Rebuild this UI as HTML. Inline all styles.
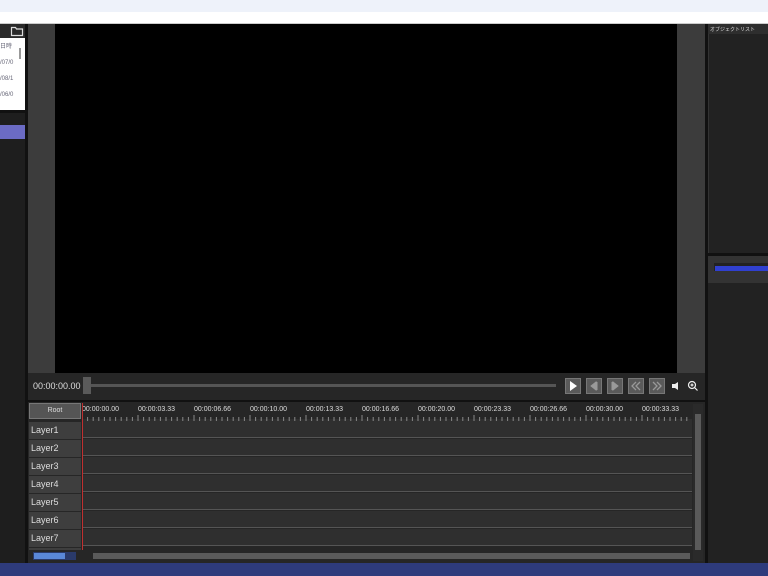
<!DOCTYPE html>
<html><head><meta charset="utf-8"><style>
*{margin:0;padding:0;box-sizing:border-box}
body{width:768px;height:576px;overflow:hidden;background:#1e1e1e;font-family:"Liberation Sans","Noto Sans CJK JP",sans-serif;position:relative}
.a{position:absolute}
.t{font-size:7px;color:#ddd}
.lay{position:absolute;left:29px;width:52px;height:17px;background:#3e3e3e;color:#ddd;font-size:9px;line-height:17px;padding-left:2px}
.row{position:absolute;left:82px;width:610px;height:17px;background:#2f2f2f;border-bottom:1px solid #555}
.btn{position:absolute;top:378px;width:16px;height:16px;background:#5a5a5a;border:1px solid #777}
</style></head><body>
<div class="a" style="left:0;top:0;width:768px;height:12px;background:#eef2fa"></div>
<div class="a" style="left:0;top:12px;width:768px;height:12px;background:#fff;border-bottom:1px solid #ccc"></div>
<!-- left panel -->
<div class="a" style="left:0;top:24px;width:25px;height:14px;background:#2a2a2a"></div>
<svg class="a" style="left:10px;top:25px" width="14" height="12"><path d="M1.5 2.5h4l1 1.5h6v6.5h-11z" fill="none" stroke="#ddd" stroke-width="1.2"/></svg>
<div class="a" style="left:0;top:38px;width:25px;height:72px;background:#fff;font-size:6px;color:#667;line-height:16px;padding-top:1px">日時<br>/07/0<br>/08/1<br>/06/0</div>
<div class="a" style="left:19px;top:48px;width:2px;height:11px;background:#999"></div>
<div class="a" style="left:0;top:110px;width:25px;height:3px;background:#111"></div>
<div class="a" style="left:0;top:125px;width:25px;height:14px;background:#6b6bc4"></div>
<div class="a" style="left:25px;top:24px;width:3px;height:540px;background:#111"></div>
<!-- preview -->
<div class="a" style="left:28px;top:24px;width:677px;height:349px;background:#3c3c3c"></div>
<div class="a" style="left:55px;top:24px;width:622px;height:349px;background:#000"></div>
<div class="a" style="left:28px;top:373px;width:677px;height:27px;background:#262626"></div>
<div class="a t" style="left:33px;top:381px;font-size:9px;color:#ddd">00:00:00.00</div>
<div class="a" style="left:90px;top:384px;width:466px;height:3px;background:#555"></div>
<div class="a" style="left:83px;top:377px;width:8px;height:17px;background:#5a5a5a"></div>
<div class="btn" style="left:565px"><svg width="14" height="14"><path d="M4 2v10l7-5z" fill="#fff"/></svg></div>
<div class="btn" style="left:586px"><svg width="14" height="14"><path d="M9 3v8l-5-4z M10 3v8" fill="#999" stroke="#999"/></svg></div>
<div class="btn" style="left:607px"><svg width="14" height="14"><path d="M5 3v8l5-4z M4 3v8" fill="#999" stroke="#999"/></svg></div>
<div class="btn" style="left:628px"><svg width="14" height="14"><path d="M7 3l-4 4 4 4M11 3l-4 4 4 4" fill="none" stroke="#999" stroke-width="1.3"/></svg></div>
<div class="btn" style="left:649px"><svg width="14" height="14"><path d="M3 3l4 4-4 4M7 3l4 4-4 4" fill="none" stroke="#999" stroke-width="1.3"/></svg></div>
<svg class="a" style="left:671px;top:381px" width="10" height="10"><path d="M1 3h3l3-2v8l-3-2h-3z" fill="#eee"/></svg>
<svg class="a" style="left:687px;top:380px" width="12" height="12"><circle cx="5" cy="5" r="3.5" fill="none" stroke="#eee" stroke-width="1.2"/><path d="M7.5 7.5l3 3M3.5 5h3M5 3.5v3" stroke="#eee" stroke-width="1.2"/></svg>
<div class="a" style="left:28px;top:400px;width:677px;height:2px;background:#111"></div>
<!-- timeline -->
<div class="a" style="left:28px;top:402px;width:677px;height:161px;background:#262626"></div>
<div class="a" style="left:29px;top:403px;width:52px;height:16px;background:#555;border:1px solid #777;color:#ddd;font-size:7px;text-align:center;line-height:14px">Root</div>
<div class="a" style="left:82px;top:419px;width:610px;height:2px;background:#2f2f2f"></div>
<svg class="a" style="left:82px;top:403px" width="610" height="18">
<g font-size="7" fill="#ddd" font-family="Liberation Sans">
<text x="0" y="8">00:00:00.00</text><text x="56" y="8">00:00:03.33</text><text x="112" y="8">00:00:06.66</text><text x="168" y="8">00:00:10.00</text><text x="224" y="8">00:00:13.33</text><text x="280" y="8">00:00:16.66</text><text x="336" y="8">00:00:20.00</text><text x="392" y="8">00:00:23.33</text><text x="448" y="8">00:00:26.66</text><text x="504" y="8">00:00:30.00</text><text x="560" y="8">00:00:33.33</text></g>
<path d="M0 12v6M5.6 14v4M11.2 14v4M16.8 14v4M22.4 14v4M28 14v4M33.6 14v4M39.2 14v4M44.8 14v4M50.4 14v4M56 12v6M61.6 14v4M67.2 14v4M72.8 14v4M78.4 14v4M84 14v4M89.6 14v4M95.2 14v4M100.8 14v4M106.4 14v4M112 12v6M117.6 14v4M123.2 14v4M128.8 14v4M134.4 14v4M140 14v4M145.6 14v4M151.2 14v4M156.8 14v4M162.4 14v4M168 12v6M173.6 14v4M179.2 14v4M184.8 14v4M190.4 14v4M196 14v4M201.6 14v4M207.2 14v4M212.8 14v4M218.4 14v4M224 12v6M229.6 14v4M235.2 14v4M240.8 14v4M246.4 14v4M252 14v4M257.6 14v4M263.2 14v4M268.8 14v4M274.4 14v4M280 12v6M285.6 14v4M291.2 14v4M296.8 14v4M302.4 14v4M308 14v4M313.6 14v4M319.2 14v4M324.8 14v4M330.4 14v4M336 12v6M341.6 14v4M347.2 14v4M352.8 14v4M358.4 14v4M364 14v4M369.6 14v4M375.2 14v4M380.8 14v4M386.4 14v4M392 12v6M397.6 14v4M403.2 14v4M408.8 14v4M414.4 14v4M420 14v4M425.6 14v4M431.2 14v4M436.8 14v4M442.4 14v4M448 12v6M453.6 14v4M459.2 14v4M464.8 14v4M470.4 14v4M476 14v4M481.6 14v4M487.2 14v4M492.8 14v4M498.4 14v4M504 12v6M509.6 14v4M515.2 14v4M520.8 14v4M526.4 14v4M532 14v4M537.6 14v4M543.2 14v4M548.8 14v4M554.4 14v4M560 12v6M565.6 14v4M571.2 14v4M576.8 14v4M582.4 14v4M588 14v4M593.6 14v4M599.2 14v4M604.8 14v4" stroke="#888" stroke-width="1"/>
</svg>
<div class="row" style="top:421px"></div><div class="lay" style="top:422px">Layer1</div>
<div class="row" style="top:439px"></div><div class="lay" style="top:440px">Layer2</div>
<div class="row" style="top:457px"></div><div class="lay" style="top:458px">Layer3</div>
<div class="row" style="top:475px"></div><div class="lay" style="top:476px">Layer4</div>
<div class="row" style="top:493px"></div><div class="lay" style="top:494px">Layer5</div>
<div class="row" style="top:511px"></div><div class="lay" style="top:512px">Layer6</div>
<div class="row" style="top:529px"></div><div class="lay" style="top:530px">Layer7</div>
<div class="lay" style="top:548px;height:2px"></div>
<div class="a" style="left:82px;top:403px;width:1px;height:147px;background:#c03030"></div>
<div class="a" style="left:693px;top:404px;width:10px;height:157px;background:#2a2a2a"></div>
<div class="a" style="left:695px;top:414px;width:6px;height:136px;background:#5a5a5a"></div>
<div class="a" style="left:33px;top:552px;width:43px;height:8px;background:#2a3a6a"></div>
<div class="a" style="left:34px;top:553px;width:31px;height:6px;background:#5a88d8"></div>
<div class="a" style="left:93px;top:553px;width:597px;height:6px;background:#5a5a5a"></div>
<!-- right panel -->
<div class="a" style="left:705px;top:24px;width:3px;height:540px;background:#111"></div>
<div class="a" style="left:708px;top:24px;width:60px;height:230px;background:#222;border-left:1px solid #333"></div>
<div class="a" style="left:708px;top:24px;width:60px;height:10px;background:#2e2e2e;font-size:5px;color:#ddd;padding:2px 0 0 2px">オブジェクトリスト</div>
<div class="a" style="left:708px;top:253px;width:60px;height:3px;background:#111"></div>
<div class="a" style="left:708px;top:256px;width:60px;height:27px;background:#333"></div>
<div class="a" style="left:714px;top:263px;width:54px;height:8px;background:#222"></div>
<div class="a" style="left:715px;top:266px;width:53px;height:5px;background:#3040d0"></div>
<div class="a" style="left:708px;top:283px;width:60px;height:281px;background:#222"></div>
<div class="a" style="left:0;top:563px;width:768px;height:13px;background:#2e3b7c"></div>
</body></html>
